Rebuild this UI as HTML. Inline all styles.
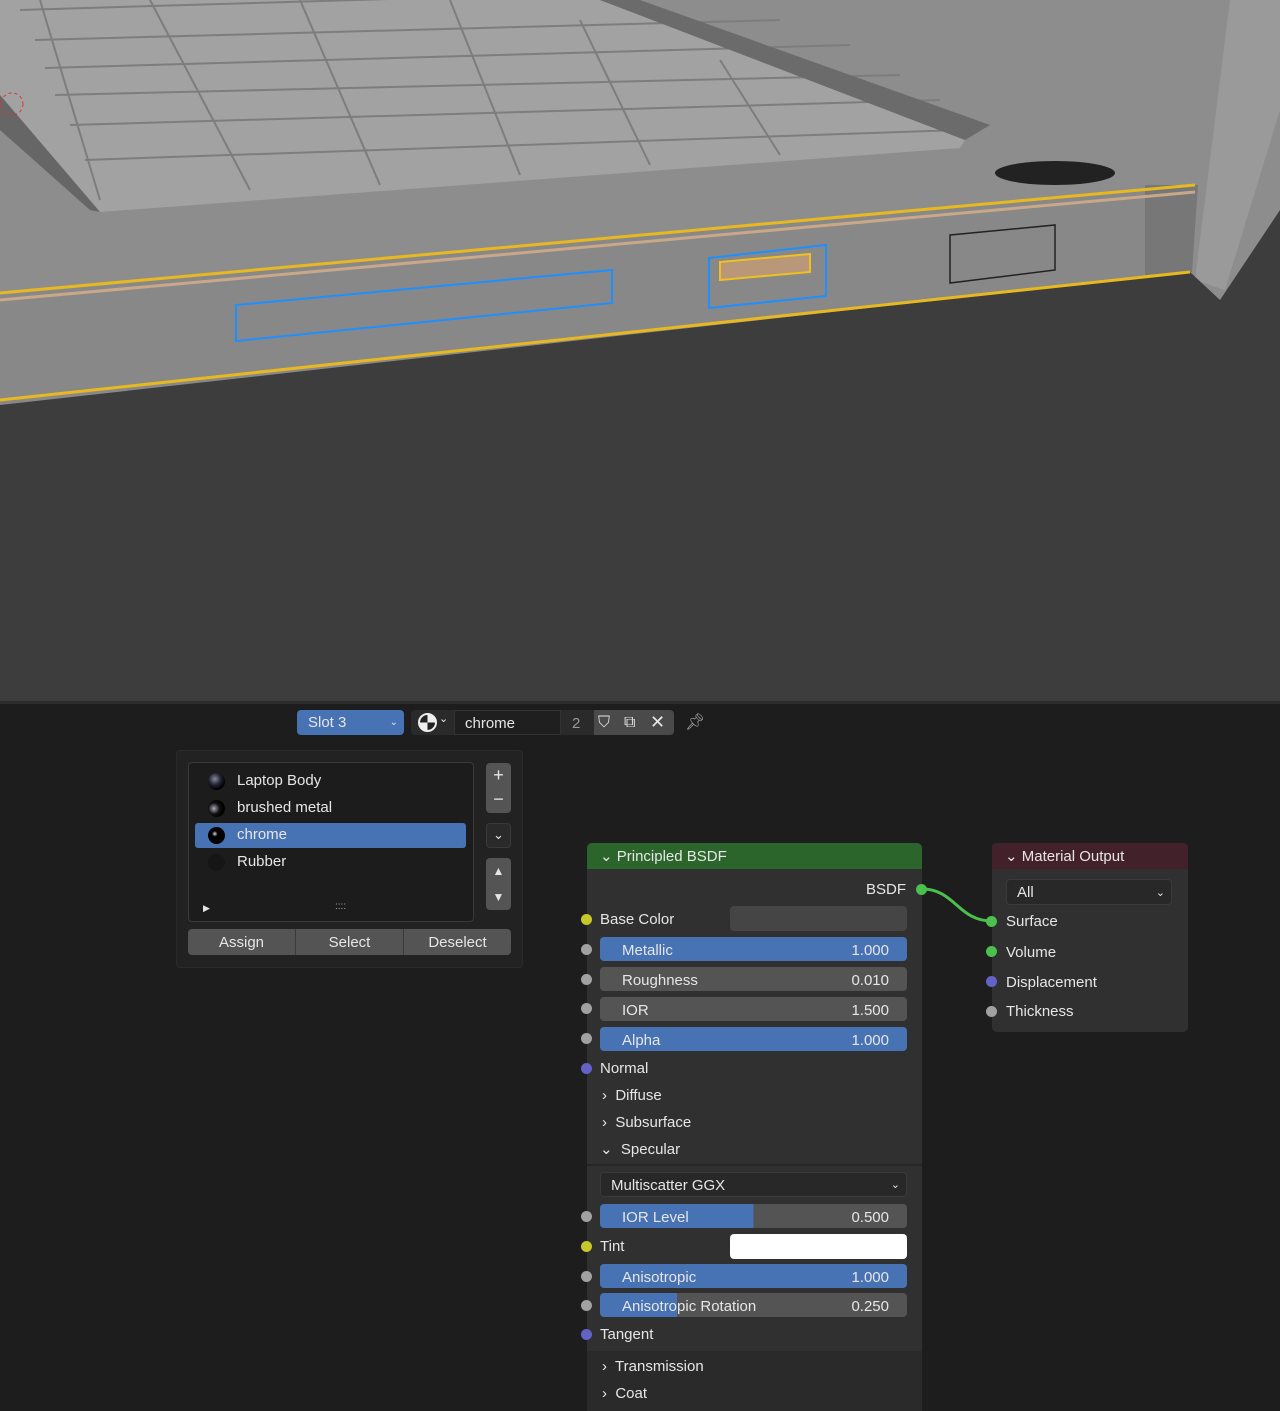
<!DOCTYPE html>
<html><head><meta charset="utf-8"><style>
*{box-sizing:border-box;margin:0;padding:0}
body{width:1280px;height:1391px;overflow:hidden;background:#1d1d1d;font-family:"Liberation Sans",sans-serif;color:#e6e6e6;font-size:15px;position:relative}
.a{position:absolute}
.f{position:absolute;height:24px;border-radius:4px;background:#545454;color:#e6e6e6;line-height:27px;padding:0 18px 0 22px}
.f span{float:right}
.b{background:#4772b3}
.s{position:absolute;width:11px;height:11px;border-radius:50%;left:-6px}
.t{position:absolute;line-height:24px}
</style></head><body>
<svg class="a" style="left:0;top:0" width="1280" height="703" viewBox="0 0 1280 703">
<rect width="1280" height="703" fill="#8d8d8d"/>
<polygon points="1230,0 1280,0 1280,110 1225,290 1195,280" fill="#9a9a9a"/>
<polygon points="0,0 600,0 965,140 960,148 100,212 0,95" fill="#a2a2a2"/>
<g stroke="#7d7d7d" stroke-width="2" fill="none">
<line x1="20" y1="10" x2="690" y2="-10"/><line x1="35" y1="40" x2="780" y2="20"/><line x1="45" y1="68" x2="850" y2="45"/><line x1="55" y1="95" x2="900" y2="75"/><line x1="70" y1="125" x2="940" y2="100"/><line x1="85" y1="160" x2="960" y2="130"/>
<line x1="150" y1="0" x2="250" y2="190"/><line x1="300" y1="0" x2="380" y2="185"/><line x1="450" y1="0" x2="520" y2="175"/><line x1="580" y1="20" x2="650" y2="165"/><line x1="720" y1="60" x2="780" y2="155"/><line x1="40" y1="0" x2="100" y2="200"/>
</g>
<polygon points="600,0 640,0 990,125 965,140" fill="#6b6b6b"/>
<polygon points="0,95 100,212 90,210 0,130" fill="#666"/>
<polygon points="0,295 1195,185 1190,272 0,405" fill="#888"/>
<polygon points="1145,185 1198,185 1192,272 1145,275" fill="#777"/>
<line x1="0" y1="293" x2="1195" y2="185" stroke="#e8b820" stroke-width="3"/>
<line x1="0" y1="300" x2="1195" y2="192" stroke="#c8a888" stroke-width="3"/>
<polygon points="0,405 1190,272 1220,300 1280,210 1280,703 0,703" fill="#3d3d3d"/>
<line x1="0" y1="400" x2="1190" y2="272" stroke="#e8b820" stroke-width="3"/>
<ellipse cx="1055" cy="173" rx="60" ry="12" fill="#222"/>
<polygon points="236,305 612,270 612,303 236,341" fill="none" stroke="#1e8fff" stroke-width="2"/>
<polygon points="709,258 826,245 826,296 709,308" fill="none" stroke="#1e8fff" stroke-width="2"/>
<polygon points="720,262 810,254 810,272 720,280" fill="#b89878" stroke="#f0c020" stroke-width="2"/>
<polygon points="950,235 1055,225 1055,270 950,283" fill="none" stroke="#222" stroke-width="1.5"/>
<circle cx="12" cy="104" r="11" fill="none" stroke="#d33" stroke-dasharray="3 3"/>
</svg>
<div class="a" style="left:0;top:701px;width:1280px;height:3px;background:#2c2c2c"></div>
<!-- header -->
<div class="a" style="left:297px;top:710px;width:107px;height:25px;background:#4772b3;border-radius:4px;padding-left:11px;line-height:26px">Slot 3<span style="position:absolute;right:6px;font-size:10px">⌄</span></div>
<div class="a" style="left:411px;top:710px;width:263px;height:25px;background:#2a2a2a;border-radius:4px"></div>
<div class="a" style="left:418px;top:713px;width:19px;height:19px;border-radius:50%;background:conic-gradient(#eee 0 25%,#222 0 50%,#eee 0 75%,#222 0);border:2px solid #eee"></div>
<div class="a" style="left:439px;top:712px;font-size:11px">⌄</div>
<div class="a" style="left:454px;top:710px;width:107px;height:25px;background:#1f1f1f;border:1px solid #333;line-height:25px;padding-left:10px">chrome</div>
<div class="a" style="left:572px;top:711px;line-height:25px;color:#999">2</div>
<div class="a" style="left:594px;top:710px;width:80px;height:25px;background:#4a4a4a;border-radius:0 4px 4px 0"></div>
<div class="a" style="left:650px;top:710px;line-height:25px;font-size:18px">✕</div>
<div class="a" style="left:624px;top:710px;line-height:25px;font-size:16px">⧉</div>
<div class="a" style="left:598px;top:710px;line-height:25px;font-size:16px">⛉</div>
<div class="a" style="left:685px;top:710px;line-height:25px;font-size:16px;color:#aaa">📌︎</div>
<!-- popup -->
<div class="a" style="left:176px;top:750px;width:347px;height:218px;background:#222;border:1px solid #2a2a2a;border-radius:4px"></div>
<div class="a" style="left:188px;top:762px;width:286px;height:160px;background:#1c1c1c;border:1px solid #3a3a3a;border-radius:4px"></div>
<div class="a" style="left:195px;top:823px;width:271px;height:25px;background:#4772b3;border-radius:3px"></div>
<div class="t" style="left:237px;top:769px">Laptop Body</div>
<div class="t" style="left:237px;top:796px">brushed metal</div>
<div class="t" style="left:237px;top:823px">chrome</div>
<div class="t" style="left:237px;top:850px">Rubber</div>
<div class="a" style="left:208px;top:773px;width:17px;height:17px;border-radius:50%;background:radial-gradient(circle at 40% 35%,#889 0,#223 40%,#000 70%)"></div>
<div class="a" style="left:208px;top:800px;width:17px;height:17px;border-radius:50%;background:radial-gradient(circle at 35% 50%,#aab 0,#111 40%,#000 70%)"></div>
<div class="a" style="left:208px;top:827px;width:17px;height:17px;border-radius:50%;background:radial-gradient(circle at 40% 40%,#ddd 0,#000 20%)"></div>
<div class="a" style="left:208px;top:854px;width:17px;height:17px;border-radius:50%;background:#161616"></div>
<div class="a" style="left:203px;top:903px;font-size:9px">▶</div>
<div class="a" style="left:335px;top:901px;font-size:10px;color:#aaa">::::</div>
<div class="a" style="left:486px;top:763px;width:25px;height:50px;background:#545454;border-radius:4px;text-align:center;line-height:24px;font-size:18px">+<br>−</div>
<div class="a" style="left:486px;top:823px;width:25px;height:25px;background:#2a2a2a;border:1px solid #3a3a3a;border-radius:4px;text-align:center;line-height:22px;font-size:13px">⌄</div>
<div class="a" style="left:486px;top:858px;width:25px;height:52px;background:#545454;border-radius:4px;text-align:center;line-height:26px;font-size:12px">▲<br>▼</div>
<div class="a" style="left:188px;top:929px;width:323px;height:26px;background:#545454;border-radius:4px;display:flex;line-height:28px;text-align:center">
<div style="flex:1;border-right:1px solid #3a3a3a">Assign</div><div style="flex:1;border-right:1px solid #3a3a3a">Select</div><div style="flex:1">Deselect</div></div>
<!-- link -->
<svg class="a" style="left:0;top:0" width="1280" height="1391"><path d="M922,889 C955,889 958,921 992,921" stroke="#4cc04c" stroke-width="3" fill="none"/></svg>
<!-- principled -->
<div class="a" style="left:587px;top:843px;width:335px;height:560px;background:#303030;border-radius:5px 5px 0 0">
<div class="a" style="left:0;top:0;width:335px;height:26px;background:#2c652c;border-radius:5px 5px 0 0;line-height:28px;padding-left:13px">⌄ Principled BSDF</div>
<div class="t" style="right:16px;top:35px">BSDF</div><div class="s" style="left:329px;top:41px;background:#4cc04c"></div>
<div class="s" style="top:71px;background:#c7c729"></div><div class="t" style="left:13px;top:65px">Base Color</div>
<div class="a" style="left:143px;top:63px;width:177px;height:25px;background:#454545;border-radius:4px"></div>
<div class="s" style="top:101px;background:#a1a1a1"></div><div class="f b" style="left:13px;top:94px;width:307px">Metallic<span>1.000</span></div>
<div class="s" style="top:131px;background:#a1a1a1"></div><div class="f" style="left:13px;top:124px;width:307px">Roughness<span>0.010</span></div>
<div class="s" style="top:160px;background:#a1a1a1"></div><div class="f" style="left:13px;top:154px;width:307px">IOR<span>1.500</span></div>
<div class="s" style="top:190px;background:#a1a1a1"></div><div class="f b" style="left:13px;top:184px;width:307px">Alpha<span>1.000</span></div>
<div class="s" style="top:220px;background:#6363c7"></div><div class="t" style="left:13px;top:214px">Normal</div>
<div class="t" style="left:15px;top:241px">›&nbsp; Diffuse</div>
<div class="t" style="left:15px;top:268px">›&nbsp; Subsurface</div>
<div class="t" style="left:13px;top:295px">⌄&nbsp; Specular</div>
<div class="a" style="left:0;top:321px;width:335px;height:2px;background:#262626"></div>
<div class="a" style="left:13px;top:329px;width:307px;height:25px;background:#282828;border:1px solid #3a3a3a;border-radius:4px;line-height:25px;padding-left:10px">Multiscatter GGX<span style="float:right;margin-right:6px;font-size:11px">⌄</span></div>
<div class="s" style="top:368px;background:#a1a1a1"></div><div class="f" style="left:13px;top:361px;width:307px;background:linear-gradient(90deg,#4772b3 50%,#545454 50%)">IOR Level<span>0.500</span></div>
<div class="s" style="top:398px;background:#c7c729"></div><div class="t" style="left:13px;top:392px">Tint</div>
<div class="a" style="left:143px;top:391px;width:177px;height:25px;background:#fff;border-radius:4px"></div>
<div class="s" style="top:428px;background:#a1a1a1"></div><div class="f b" style="left:13px;top:421px;width:307px">Anisotropic<span>1.000</span></div>
<div class="s" style="top:457px;background:#a1a1a1"></div><div class="f" style="left:13px;top:450px;width:307px;background:linear-gradient(90deg,#4772b3 25%,#545454 25%)">Anisotropic Rotation<span>0.250</span></div>
<div class="s" style="top:486px;background:#6363c7"></div><div class="t" style="left:13px;top:480px">Tangent</div>
<div class="a" style="left:0;top:508px;width:335px;height:60px;background:#2a2a2a"></div>
<div class="t" style="left:15px;top:512px">›&nbsp; Transmission</div>
<div class="t" style="left:15px;top:539px">›&nbsp; Coat</div>
</div>
<!-- output -->
<div class="a" style="left:992px;top:843px;width:196px;height:189px;background:#303030;border-radius:5px">
<div class="a" style="left:0;top:0;width:196px;height:26px;background:#43212a;border-radius:5px 5px 0 0;line-height:28px;padding-left:13px">⌄ Material Output</div>
<div class="a" style="left:14px;top:36px;width:166px;height:26px;background:#282828;border:1px solid #3a3a3a;border-radius:4px;line-height:26px;padding-left:10px">All<span style="float:right;margin-right:6px;font-size:11px">⌄</span></div>
<div class="s" style="top:73px;background:#4cc04c"></div><div class="t" style="left:14px;top:67px">Surface</div>
<div class="s" style="top:103px;background:#4cc04c"></div><div class="t" style="left:14px;top:98px">Volume</div>
<div class="s" style="top:133px;background:#6363c7"></div><div class="t" style="left:14px;top:128px">Displacement</div>
<div class="s" style="top:163px;background:#a1a1a1"></div><div class="t" style="left:14px;top:157px">Thickness</div>
</div>
</body></html>
